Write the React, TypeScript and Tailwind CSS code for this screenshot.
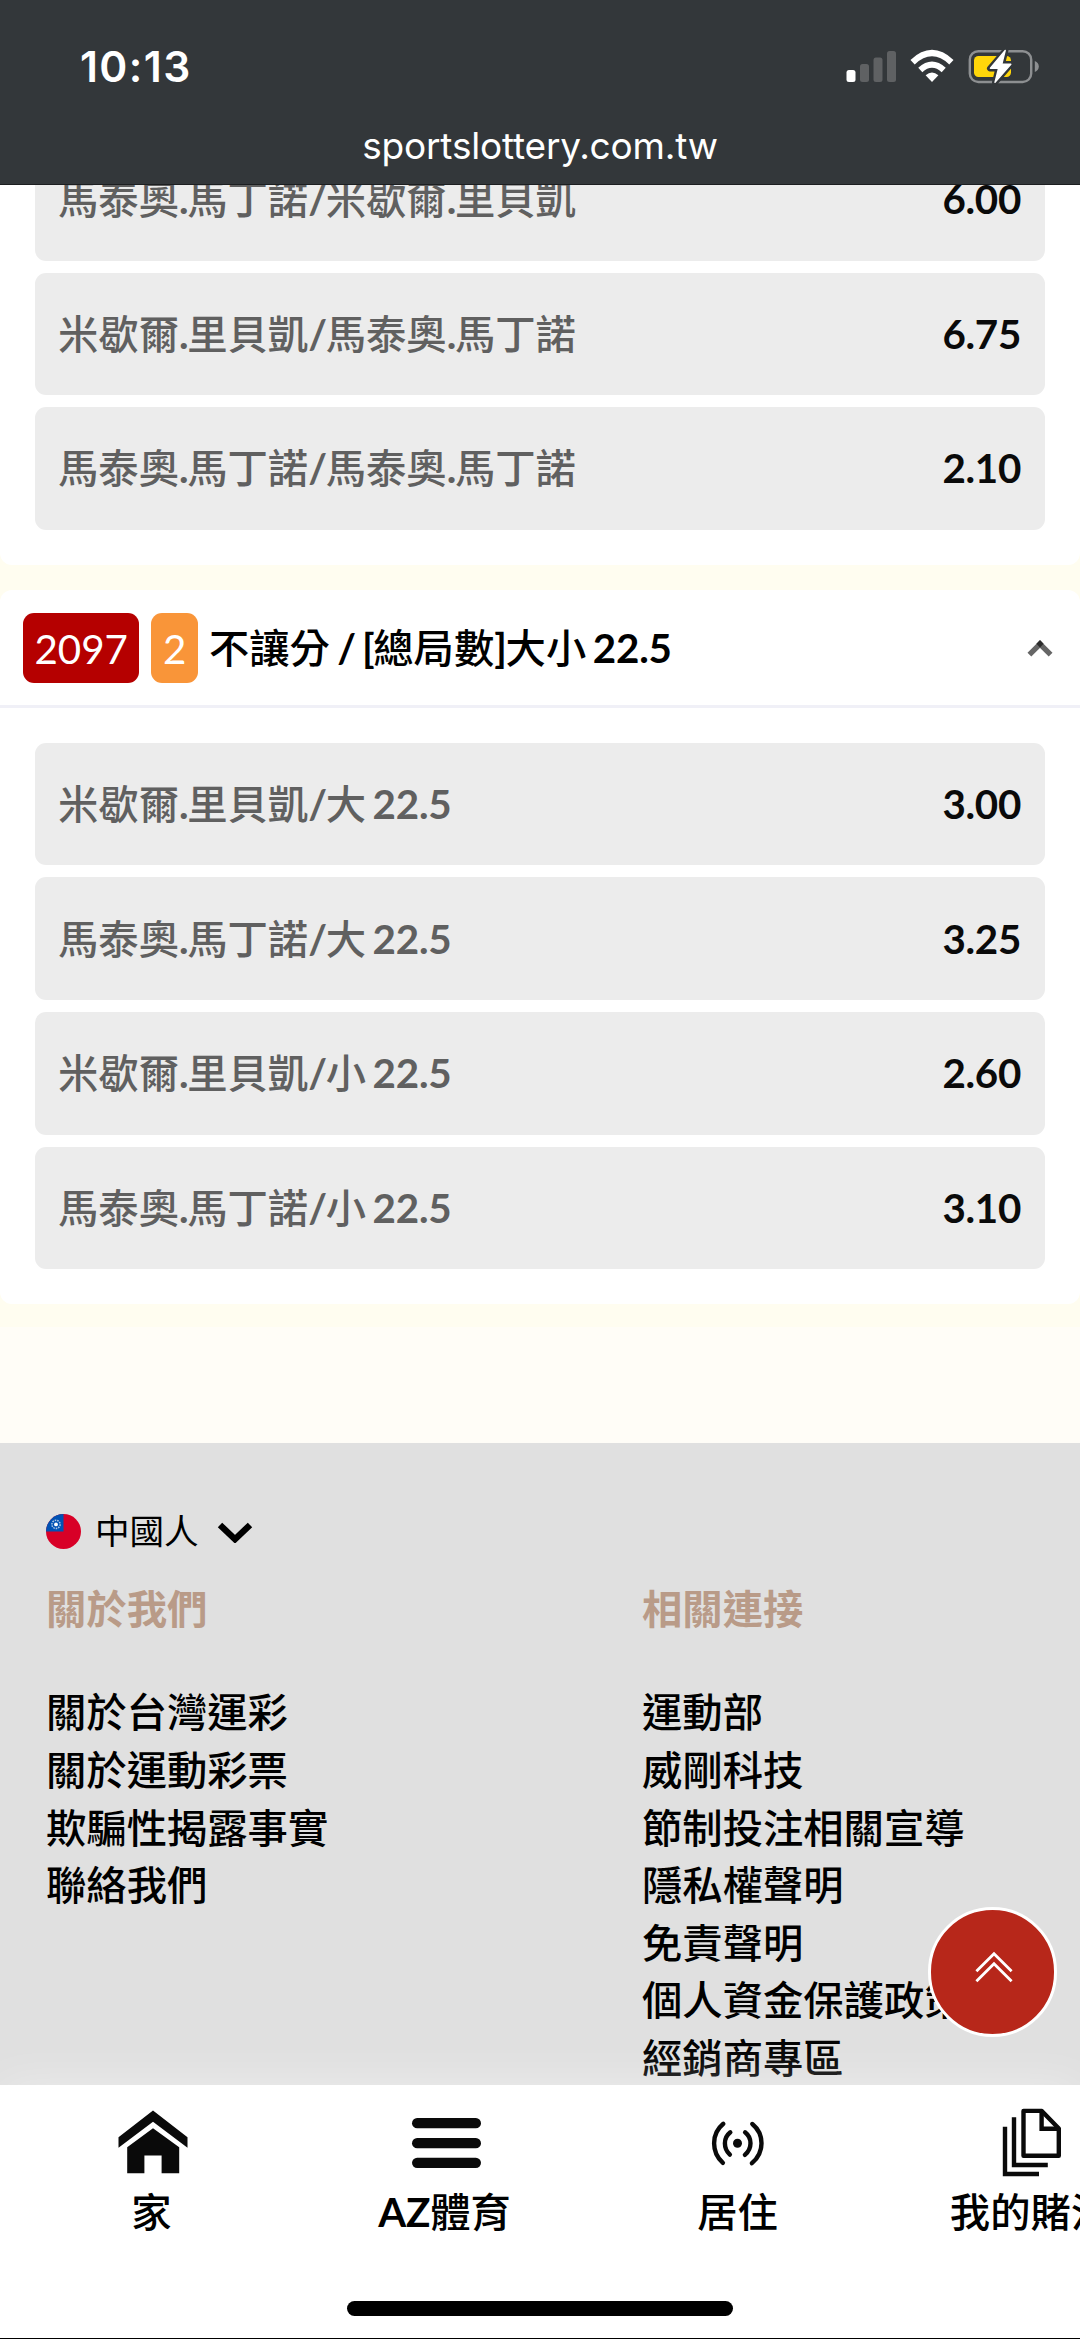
import { useState } from 'react';

type Odd = { label: string; price: string };

const setBetting: Odd[] = [
  { label: '馬泰奧.馬丁諾/米歇爾.里貝凱', price: '6.00' },
  { label: '米歇爾.里貝凱/馬泰奧.馬丁諾', price: '6.75' },
  { label: '馬泰奧.馬丁諾/馬泰奧.馬丁諾', price: '2.10' },
];

const totalGames: Odd[] = [
  { label: '米歇爾.里貝凱/大 22.5', price: '3.00' },
  { label: '馬泰奧.馬丁諾/大 22.5', price: '3.25' },
  { label: '米歇爾.里貝凱/小 22.5', price: '2.60' },
  { label: '馬泰奧.馬丁諾/小 22.5', price: '3.10' },
];

const aboutLinks = ['關於台灣運彩', '關於運動彩票', '欺騙性揭露事實', '聯絡我們'];

const relatedLinks = ['運動部', '威剛科技', '節制投注相關宣導', '隱私權聲明', '免責聲明', '個人資金保護政策', '經銷商專區'];

// latin runs are set bolder than the chinese around them, punctuation is tighter
function MixedText({ text }: { text: string }) {
  return (
    <>
      {text.split(/( ?[\dA-Z][\dA-Z.]*|[ -~]+)/).map((part, i) => {
        if (i % 2 === 0) return part;
        return (
          <span
            key={i}
            className={
              /[\dA-Z]/.test(part)
                ? 'font-bold tracking-[-0.2px] [word-spacing:-3px]'
                : 'font-bold tracking-[-1.3px] [word-spacing:-1.2px]'
            }
          >
            {part}
          </span>
        );
      })}
    </>
  );
}

function StatusIcons() {
  return (
    <svg width="194" height="36" viewBox="846 49 194 36" fill="none">
      <rect x="846.5" y="70" width="9" height="12" rx="2.5" fill="#fff" />
      <rect x="860" y="64" width="9" height="18" rx="2.5" fill="#5f6163" />
      <rect x="873.5" y="57.5" width="9" height="24.5" rx="2.5" fill="#5f6163" />
      <rect x="887" y="51" width="9" height="31" rx="2.5" fill="#5f6163" />

      <path d="M932 82 L925.6 75.2 Q932 69.6 938.4 75.2 Z" fill="#fff" />
      <path d="M920.3 70 Q932 59.2 943.7 70" stroke="#fff" strokeWidth="6" />
      <path d="M912.6 62.2 Q932 44 951.4 62.2" stroke="#fff" strokeWidth="6.2" />

      <rect x="969.8" y="51.2" width="61.4" height="30.8" rx="8.5" stroke="#8d8f91" strokeWidth="2.4" />
      <rect x="974" y="56" width="37" height="21" rx="4.5" fill="#ffd60a" />
      <path d="M1034.8 61 Q1038.8 62.6 1038.8 66.6 Q1038.8 70.6 1034.8 72 Z" fill="#8d8f91" />
      <path
        d="M1005.4 50.5 L990 68.4 H998.4 L995 82.5 L1011 64 H1002 Z"
        fill="#fff"
        stroke="#33373a"
        strokeWidth="6"
        strokeLinejoin="round"
      />
      <path
        d="M1005.2 50.5 L990.4 68.2 H998.6 L995 82.3 L1010.8 64.2 H1001.8 Z"
        fill="#fff"
        stroke="#fff"
        strokeWidth="1.4"
        strokeLinejoin="round"
      />
    </svg>
  );
}

function OddRow({ label, price }: Odd) {
  return (
    <button className="flex h-[122.6px] w-full shrink-0 items-center justify-between rounded-[11px] bg-[#ececec] pr-6 pl-[23px]">
      <span className="font-medium text-[#606060]">
        <MixedText text={label} />
      </span>
      <span className="font-bold tracking-[-0.3px] text-[#0a0a0a]">{price}</span>
    </button>
  );
}

function FlagIcon() {
  return (
    <svg width="35" height="35" viewBox="0 0 35 35">
      <clipPath id="flag">
        <circle cx="17.5" cy="17.5" r="17.5" />
      </clipPath>
      <g clipPath="url(#flag)">
        <rect width="35" height="35" fill="#d80027" />
        <rect width="17.5" height="17.5" fill="#0052b4" />
      </g>
      <circle cx="10" cy="10.4" r="4.1" fill="none" stroke="#a9c3e4" strokeWidth="1.5" strokeDasharray="1.6 0.9" />
      <circle cx="10" cy="10.4" r="1.9" fill="#fff" />
    </svg>
  );
}

function HomeIcon() {
  return (
    <svg width="70" height="70" viewBox="0 0 70 70" fill="#0a0a0a">
      <path d="M35 2.5 L69.5 29.2 V39.8 L35 13.8 L0.5 39.8 V29.2 Z" />
      <path d="M35 20.3 L61.2 39.2 V65.2 H43.6 V47.4 H26.4 V65.2 H9.2 V39.2 Z" />
    </svg>
  );
}

function MenuIcon() {
  return (
    <svg width="70" height="70" viewBox="0 0 70 70" fill="#0a0a0a">
      <rect x="1" y="10" width="69" height="10.3" rx="5.15" />
      <rect x="1" y="30" width="69" height="10.3" rx="5.15" />
      <rect x="1" y="49.7" width="69" height="10.3" rx="5.15" />
    </svg>
  );
}

function LiveIcon() {
  return (
    <svg width="70" height="70" viewBox="0 0 70 70" fill="none" stroke="#0a0a0a" strokeWidth="4.4" strokeLinecap="round">
      <circle cx="33.5" cy="35.2" r="4.5" fill="#0a0a0a" stroke="none" />
      <path d="M19.3 15.8 Q10.1 23.4 10.1 35.2 Q10.1 47 18.9 54.8" />
      <path d="M26.3 24.3 Q20.9 28.6 20.9 35.2 Q20.9 42 25.9 46.6" />
      <path d="M41.1 24.3 Q46.5 28.6 46.5 35.2 Q46.5 42 40.9 46.8" />
      <path d="M48.3 16 Q57.5 23.6 57.5 35.2 Q57.5 47 47.9 55.2" />
    </svg>
  );
}

function BetsIcon() {
  return (
    <svg width="70" height="70" viewBox="0 0 70 70" fill="none" stroke="#0a0a0a" strokeWidth="4.4">
      <path d="M26.5 2.9 H44.8 L61.8 20.6 V47.7 H26.5 Z" strokeLinejoin="round" />
      <path d="M44.6 3 V20.8 H62" />
      <path d="M17 9.3 V57 H50.8" />
      <path d="M8 18.7 V66 H42" />
    </svg>
  );
}

const tabs = [
  { label: '家', icon: <HomeIcon /> },
  { label: 'AZ體育', icon: <MenuIcon /> },
  { label: '居住', icon: <LiveIcon /> },
  { label: '我的賭注', icon: <BetsIcon /> },
];

function LinkColumn({ title, links }: { title: string; links: string[] }) {
  return (
    <div className="whitespace-nowrap">
      <h3 className="mb-[46px] leading-[57.6px] font-bold text-[#b99b88]">{title}</h3>
      <ul>
        {links.map((link) => (
          <li key={link} className="leading-[57.6px] font-medium">
            <a href="#">{link}</a>
          </li>
        ))}
      </ul>
    </div>
  );
}

export default function App() {
  const [isOpen, setIsOpen] = useState(true);

  return (
    <div className="relative flex h-[2339px] w-[1080px] flex-col overflow-hidden bg-[#fffdf7] font-['Lato','Noto_Sans_CJK_TC',sans-serif] text-[40.32px] leading-[58px] text-black">
      <header className="z-10 flex h-[185px] shrink-0 flex-col border-b border-[#1c1e20] bg-[#33373a] font-['Inter',sans-serif] text-white">
        <div className="flex h-[118px] items-end justify-between pr-10 pl-[80px]">
          <span className="mb-[22px] text-[42.5px] leading-[58px] font-semibold tracking-[1.4px]">10:13</span>
          <span className="mb-[33px]">
            <StatusIcons />
          </span>
        </div>
        <div className="text-center text-[37px] leading-[56px] tracking-[-0.2px]">sportslottery.com.tw</div>
      </header>

      <main className="shrink-0 bg-[#fffdf0] pb-[23px]">
        <section className="-mt-[47px] flex flex-col gap-3 rounded-b-[12px] bg-white px-[35px] pb-[35px]">
          {setBetting.map((odd) => (
            <OddRow key={odd.label} {...odd} />
          ))}
        </section>

        <section className="mt-[25px] rounded-[12px] bg-white">
          <div className="flex h-[118.6px] items-center border-b-[3px] border-[#f0f0f7] pr-[26px] pl-[23px]">
            <span className="mr-[12px] h-[70px] rounded-[11px] bg-[#b50000] px-[11.4px] leading-[72px] text-white">2097</span>
            <span className="mr-[11px] h-[70px] rounded-[11px] bg-[#f99539] px-[11.6px] leading-[72px] text-white">2</span>
            <h2 className="grow font-medium">
              <MixedText text="不讓分 / [總局數]大小 22.5" />
            </h2>
            <button onClick={() => setIsOpen(!isOpen)}>
              <svg width="28" height="20" viewBox="0 0 28 20" fill="none" stroke="#666" strokeWidth="5.4">
                <path d="M3.4 16.6 L14 6 L24.6 16.6" />
                <path d="M14 2 L17.6 5.7 L14 9.4 L10.4 5.7 Z" fill="#2b2b2b" stroke="none" />
              </svg>
            </button>
          </div>
          {isOpen && (
            <div className="flex flex-col gap-3 px-[35px] pt-[34.4px] pb-[34.6px]">
              {totalGames.map((odd) => (
                <OddRow key={odd.label} {...odd} />
              ))}
            </div>
          )}
        </section>
      </main>

      <footer className="mt-[116px] h-[900px] shrink-0 bg-[#e0e0e0] px-[46px] pt-[60px]">
        <button className="flex h-[58px] items-center text-[34.56px]">
          <FlagIcon />
          <span className="mb-[2px] ml-[14px]">中國人</span>
          <svg className="ml-[18px]" width="36" height="22" viewBox="0 0 36 22" fill="none" stroke="#000" strokeWidth="6.4">
            <path d="M3 4 L18 18.2 L33 4" />
          </svg>
        </button>
        <div className="mt-[19px] grid grid-cols-[596px_1fr]">
          <LinkColumn title="關於我們" links={aboutLinks} />
          <LinkColumn title="相關連接" links={relatedLinks} />
        </div>
      </footer>

      {/* back to top */}
      <button className="absolute top-[1907px] left-[927.5px] z-10 flex size-[129.6px] items-center justify-center rounded-full border-[3px] border-white bg-[#b7271a]">
        <svg className="mb-[10px] ml-[3px]" width="38" height="32" viewBox="0 0 38 32" fill="none" stroke="#fff" strokeWidth="2.8">
          <path d="M1.4 20.3 L19 2.8 L36.6 20.3" />
          <path d="M1.4 30.3 L19 12.8 L36.6 30.3" />
        </svg>
      </button>

      <nav className="absolute bottom-0 left-0 flex h-[254px] w-full flex-col items-center border-b border-black bg-white shadow-[0_0_44px_rgba(255,255,255,0.4)]">
        <div className="flex w-full shrink-0 pl-[6px]">
          {tabs.map((tab) => (
            <a key={tab.label} href="#" className="flex w-[293px] shrink-0 flex-col items-center pt-[23px] font-medium">
              {tab.icon}
              <span className="mt-[5px] mr-[2px]">
                <MixedText text={tab.label} />
              </span>
            </a>
          ))}
        </div>
        <div className="mt-[60px] h-[15px] w-[386px] shrink-0 rounded-full bg-black" />
      </nav>
    </div>
  );
}
